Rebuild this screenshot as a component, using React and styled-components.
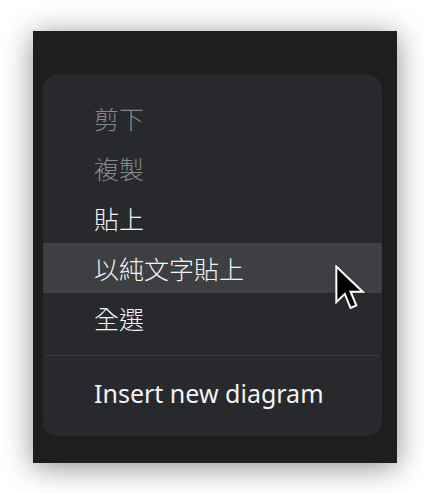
import React from "react";
import styled, { createGlobalStyle } from "styled-components";

const Global = createGlobalStyle`
  html, body { margin: 0; padding: 0; background: #ffffff; }
  body { font-family: "Noto Sans", "Noto Sans CJK TC", sans-serif; }
`;

const Stage = styled.div`
  width: 424px;
  height: 493px;
  padding: 31px 0 0 33px;
  box-sizing: border-box;
`;

const Window = styled.div`
  position: relative;
  width: 364px;
  height: 432px;
  background: #1e1e1e;
  box-shadow: 0 4px 28px rgba(0, 0, 0, 0.45);
  padding: 44px 0 0 10px;
  box-sizing: border-box;
`;

const Menu = styled.div`
  width: 339px;
  background: #28292d;
  border-radius: 14px;
  padding: 18px 0;
  display: flex;
  flex-direction: column;
  overflow: hidden;
`;

const Item = styled.div`
  height: 50px;
  display: flex;
  align-items: center;
  padding-left: 51px;
  font-family: "Noto Sans", "Noto Sans CJK TC", sans-serif;
  font-size: 25px;
  font-weight: ${(p) => (p.$latin ? 400 : 300)};
  color: ${(p) => (p.$disabled ? "#86888c" : "#f4f4f4")};
  background: ${(p) => (p.$active ? "#3e3f42" : "transparent")};
  white-space: nowrap;
`;

const Separator = styled.div`
  height: 25px;
  display: flex;
  align-items: center;
  padding: 0 3px;
  &::after {
    content: "";
    flex: 1;
    height: 1px;
    background: #3b3c40;
  }
`;

const Cursor = styled.svg`
  position: absolute;
  left: 302px;
  top: 234px;
  width: 30px;
  height: 46px;
`;

export default function App() {
  return (
    <>
      <Global />
      <Stage>
        <Window>
          <Menu>
            <Item $disabled>剪下</Item>
            <Item $disabled>複製</Item>
            <Item>貼上</Item>
            <Item $active>以純文字貼上</Item>
            <Item>全選</Item>
            <Separator />
            <Item $latin>Insert new diagram</Item>
          </Menu>
          <Cursor viewBox="0 0 13.5 20.5">
            <path
              d="M0.6 0.6 L0.6 16.6 L4.4 12.9 L7 19.2 L9.6 18.1 L7 11.9 L12.4 11.9 Z"
              fill="#000"
              stroke="#fff"
              strokeWidth="0.9"
              strokeLinejoin="miter"
            />
          </Cursor>
        </Window>
      </Stage>
    </>
  );
}
